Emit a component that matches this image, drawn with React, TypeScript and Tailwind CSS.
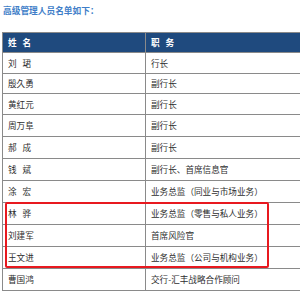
import React from "react";

const rows: { name: string; title: string; h: number }[] = [
  { name: "刘 珺", title: "行长", h: 21 },
  { name: "殷久勇", title: "副行长", h: 20 },
  { name: "黄红元", title: "副行长", h: 21 },
  { name: "周万阜", title: "副行长", h: 22 },
  { name: "郝 成", title: "副行长", h: 22 },
  { name: "钱 斌", title: "副行长、首席信息官", h: 22 },
  { name: "涂 宏", title: "业务总监（同业与市场业务）", h: 22 },
  { name: "林 骅", title: "业务总监（零售与私人业务）", h: 22 },
  { name: "刘建军", title: "首席风险官", h: 22 },
  { name: "王文进", title: "业务总监（公司与机构业务）", h: 22 },
  { name: "曹国鸿", title: "交行-汇丰战略合作顾问", h: 22 },
];

export default function App() {
  return (
    <div
      className="relative w-[300px] h-[300px] overflow-hidden bg-white"
      style={{ fontFamily: '"Noto Sans CJK SC", "Noto Sans", sans-serif' }}
    >
      <div className="pl-[3px] pt-[5px] h-[32px] text-[8.7px] leading-[12px] font-bold text-[#407ec8]">
        高级管理人员名单如下：
      </div>
      <div className="ml-[2px] w-[360px] border-l-[1.5px] border-t-[1.5px] border-[#8a8a8a]">
        <div className="flex h-[20px] bg-[#1f4a7e] border-b-[1.5px] border-[#8a8a8a] text-white font-bold text-[8.6px] [word-spacing:4px]">
          <div className="w-[143px] shrink-0 flex items-center pl-[5px] border-r-[1.5px] border-[#8a8a8a]">姓 名</div>
          <div className="flex-1 flex items-center pl-[5px]">职 务</div>
        </div>
        {rows.map((r, i) => (
          <div
            key={i}
            className="flex box-border border-b-[1.5px] border-[#8a8a8a] text-[8.6px] text-[#2e2e2e]"
            style={{ height: r.h }}
          >
            <div className="w-[143px] shrink-0 flex items-center pl-[5px] border-r-[1.5px] border-[#8a8a8a] [word-spacing:4px]">
              {r.name}
            </div>
            <div className="flex-1 flex items-center pl-[5px]">{r.title}</div>
          </div>
        ))}
      </div>
      <div className="absolute left-[5px] top-[202px] w-[264px] h-[66px] border-2 border-[#e8191f] rounded-[2px]" />
    </div>
  );
}
